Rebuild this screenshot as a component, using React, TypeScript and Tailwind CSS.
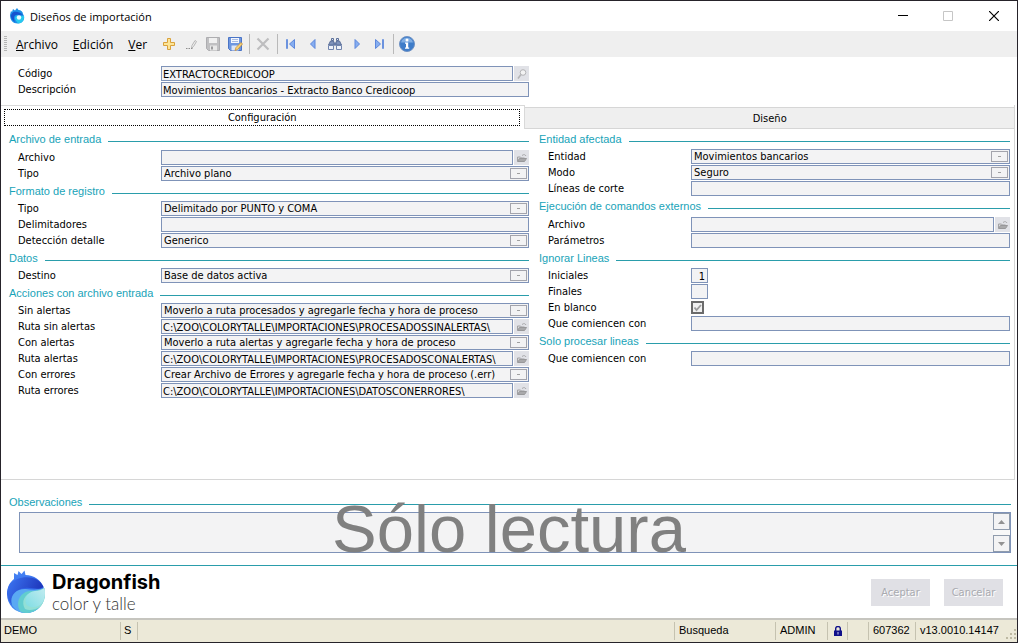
import React, { useId } from "react";
import type { ReactNode } from "react";

const FIELD =
  "h-[15px] min-w-0 flex-1 rounded-none border border-[#7f93b8] bg-[#f3f3f4] pt-px leading-[12px] text-black opacity-100 outline-none";

function WaveMark({ className }: { className: string }) {
  return (
    <svg viewBox="0 0 40 44" className={className} aria-hidden="true">
      <defs>
        <linearGradient id="body" x1="0" y1="0" x2="0.2" y2="1">
          <stop offset="0" stopColor="#4f8ff7" />
          <stop offset="0.5" stopColor="#2f62e8" />
          <stop offset="1" stopColor="#4a93f4" />
        </linearGradient>
        <linearGradient id="crest" x1="0" y1="0.2" x2="1" y2="0.6">
          <stop offset="0" stopColor="#3a72ef" />
          <stop offset="1" stopColor="#1b2fb4" />
        </linearGradient>
        <linearGradient id="foam" x1="1" y1="0" x2="0" y2="1">
          <stop offset="0" stopColor="#c3ecf0" />
          <stop offset="1" stopColor="#7fdde4" />
        </linearGradient>
      </defs>
      <path d="M8 9 L8 3 L11.500 5 L12.500 1 L15.500 4 L18.500 0.500 L19.500 5 C28 5 35 10 37.500 17 L38.500 20 C40 34 31 43 20 43 C9 43 1 35 1 24 C1 17 4 12 8 9Z" fill="url(#body)" />
      <path d="M4 14 C12 5 32 4 37.500 17 C31 21 26 17 19 18 C10 19 5 25 6 35 C1 29 0 20 4 14Z" fill="url(#crest)" />
      <path d="M6 35 C3 26 10 18 20 19 C27 20 33 20 38 18 C41 31 33 43 20 43 C14 43 9 40 6 35Z" fill="#5aa9f3" />
      <path d="M14 41 C9 33 14 21 25 21 C31 21 36 19 38.500 18 C41 31 33 43 20 43 C17 43 15 42 14 41Z" fill="#62cdcf" />
      <path d="M19 39 C15 32 18 24 27 22 C32 21 36 20 38.500 18 C40 27 38 33 34 37 C29 40 23 41 19 39Z" fill="#92dfd6" />
      <path d="M20 34 C18 27 22 22 29 21 C33 21 36 20 38.500 18 C40 26 38 32 34 35 C29 38 23 38 20 34Z" fill="url(#foam)" />
    </svg>
  );
}

function WindowMark() {
  return (
    <svg viewBox="0 0 16 16" className="size-4" aria-hidden="true">
      <path d="M1 7 L2 3 L3 4 L4 1 L6 2.500 L8 0 L9.500 2 C12 2 14 4 14 6 L15 8 C16 12 13 15.500 8.500 15.500 C4 15.500 1 12 1 7Z" fill="#1d8fe8" />
      <path d="M2.500 6 C5 2 10 4 14 6.500 L10 7 C5 6 4 9 6 14 C3 12 1 9 2.500 6Z" fill="#1553cf" />
      <path d="M6.500 12 C5 8 8 6.500 11 8 L15 8 C15.500 12 13 15.500 9 15.500 Z" fill="#27c9ee" />
      <circle cx="10" cy="9.500" r="2.200" fill="#eafcff" />
    </svg>
  );
}

const icon = "size-4";

const PlusIcon = (
  <svg viewBox="0 0 16 16" className={icon}>
    <path d="M6.500 2.500h3v4h4v3h-4v4h-3v-4h-4v-3h4z" fill="#fde596" stroke="#d9a13b" />
  </svg>
);
const PencilIcon = (
  <svg viewBox="0 0 16 16" className={icon}>
    <path d="M8.500 12.500l.5-3 3-5 1.500 1-3 5z" fill="#f2f2f2" stroke="#b4b4b4" />
    <path d="M3 12h1.500v1h-1.500zM5.500 12h1.500v1h-1.500zM8 12h1.500v1h-1.500z" fill="#8d8d8d" />
  </svg>
);
const SaveIcon = (
  <svg viewBox="0 0 16 16" className={icon}>
    <path d="M1.500 1.500h13v13h-11l-2-2z" fill="#c0c0c2" stroke="#adadb0" />
    <path d="M4 2h8v5h-8z" fill="#f0f0f0" />
    <path d="M5 9.500h7v5h-7z" fill="#e8e8e8" />
    <path d="M6 10.500h2v3h-2z" fill="#9b9b9d" />
  </svg>
);
const SaveEditIcon = (
  <svg viewBox="0 0 16 16" className={icon}>
    <path d="M1.500 1.500h13v13h-11l-2-2z" fill="#6f97df" stroke="#4a74c6" />
    <path d="M4 2h8v5h-8z" fill="#f4f7fd" />
    <path d="M5 3.500h6M5 5.500h6" stroke="#a9bce3" />
    <path d="M4.500 9.500h7v5h-7z" fill="#dce6f8" />
    <path d="M8 14.500l1-3 5-5 1.500 1.500-5 5.500z" fill="#f8d479" stroke="#c98f35" strokeWidth="0.8" />
  </svg>
);
const DeleteIcon = (
  <svg viewBox="0 0 16 16" className={icon}>
    <path d="M2.500 2.500l11 11M13.500 2.500l-11 11" stroke="#bdbdbf" strokeWidth="2.200" />
  </svg>
);
const FirstIcon = (
  <svg viewBox="0 0 16 16" className={icon}>
    <path d="M3.500 3.500h1v9h-1z" fill="#b5cff8" stroke="#6c93de" />
    <path d="M11.500 3.500v9l-5-4.500z" fill="#86aef0" stroke="#5d87dc" />
  </svg>
);
const PrevIcon = (
  <svg viewBox="0 0 16 16" className={icon}>
    <path d="M10 3.500v9l-4.500-4.500z" fill="#86aef0" stroke="#5d87dc" />
  </svg>
);
const FindIcon = (
  <svg viewBox="0 0 16 16" className={icon}>
    <path d="M4.500 2.500h2v2h-2zM9.500 2.500h2v2h-2z" fill="#dbe3f1" stroke="#5b6f99" />
    <path d="M3.500 5h3l1 4h-6zM9.500 5h3l2 4h-6z" fill="#7f93bb" stroke="#5b6f99" />
    <path d="M1.500 9.500h5v4h-5zM9.500 9.500h5v4h-5z" fill="#eef2f9" stroke="#7084ad" />
    <path d="M6.500 6.500h3v3h-3z" fill="#6479a5" />
  </svg>
);
const NextIcon = (
  <svg viewBox="0 0 16 16" className={icon}>
    <path d="M6 3.500v9l4.500-4.500z" fill="#86aef0" stroke="#5d87dc" />
  </svg>
);
const LastIcon = (
  <svg viewBox="0 0 16 16" className={icon}>
    <path d="M4.500 3.500v9l5-4.500z" fill="#86aef0" stroke="#5d87dc" />
    <path d="M11.500 3.500h1v9h-1z" fill="#b5cff8" stroke="#6c93de" />
  </svg>
);
const InfoIcon = (
  <svg viewBox="0 0 16 16" className={icon}>
    <circle cx="8" cy="8" r="7.500" fill="#3e7cc9" stroke="#6f92c4" />
    <path d="M2 6.500a6.200 6.200 0 0 1 12 0z" fill="#7fade3" />
    <circle cx="8" cy="4" r="1.500" fill="#fff" />
    <path d="M6 6.500h3.200v5h1v1.300h-4.200v-1.300h1v-3.700h-1z" fill="#fff" />
  </svg>
);

function Tool({ name, children }: { name: string; children: ReactNode }) {
  return (
    <button type="button" aria-label={name} className="flex h-6 w-[22px] items-center justify-center">
      {children}
    </button>
  );
}

function Separator() {
  return (
    <span className="flex h-5 w-[6px] justify-center">
      <span className="w-px bg-[#b9b9b9]" />
    </span>
  );
}

function Group({ title, tall, children }: { title: string; tall?: boolean; children: ReactNode }) {
  return (
    <section>
      <h2
        className={`flex items-center gap-[7px] pt-px font-['Liberation_Sans',Arial,sans-serif] text-[11px] leading-4 text-[#18a3b8] ${
          tall ? "pb-[3px]" : "pb-[2px]"
        }`}
      >
        {title}
        <span className="mt-1 h-px flex-1 bg-[#2a9dab]" />
      </h2>
      <div className="flex flex-col gap-px pb-px">{children}</div>
    </section>
  );
}

function Row({ label, id, children }: { label: string; id: string; children: ReactNode }) {
  return (
    <div className="flex h-[15px] items-center pl-[9px]">
      <label htmlFor={id} className="w-[143px] shrink-0">
        {label}
      </label>
      {children}
    </div>
  );
}

function FolderButton() {
  return (
    <button type="button" aria-label="Examinar" className="ml-px flex size-[15px] shrink-0 items-center justify-center bg-[#e1e2e7]">
      <svg viewBox="0 0 12 12" className="size-3">
        <path d="M1.500 9v-4h3l1 1h3v1" fill="#d8d8da" stroke="#a3a3a5" />
        <path d="M1.500 9.500l2-3h7l-2 3z" fill="#a9a9ab" stroke="#98989a" />
        <path d="M6 3.500c2-1.500 3-1 4 .5" fill="none" stroke="#a8a8aa" />
      </svg>
    </button>
  );
}

function TextRow({ label, value = "", folder }: { label: string; value?: string; folder?: boolean }) {
  const id = useId();
  return (
    <Row label={label} id={id}>
      <input id={id} type="text" readOnly value={value} className={`${FIELD} px-px`} />
      {folder && <FolderButton />}
    </Row>
  );
}

function SelectRow({ label, value }: { label: string; value: string }) {
  const id = useId();
  return (
    <Row label={label} id={id}>
      <div className="relative flex min-w-0 flex-1">
        <select id={id} defaultValue={value} className={`${FIELD} appearance-none pl-[2px]`}>
          <option>{value}</option>
        </select>
        <span className="pointer-events-none absolute inset-y-[2px] right-[2px] flex w-[17px] items-center justify-center border border-[#a3a4ac] bg-[#f3f3f4]">
          <span className="h-px w-[3px] bg-[#a0a0a0]" />
        </span>
      </div>
    </Row>
  );
}

function NumberRow({ label, value = "" }: { label: string; value?: string }) {
  const id = useId();
  return (
    <Row label={label} id={id}>
      <input
        id={id}
        type="text"
        readOnly
        value={value}
        className="h-[15px] w-[17px] rounded-none border border-[#7f93b8] bg-[#f3f3f4] pt-px pr-[2px] text-right leading-[12px] outline-none"
      />
    </Row>
  );
}

function CheckRow({ label }: { label: string }) {
  const id = useId();
  return (
    <Row label={label} id={id}>
      <span className="relative flex size-[13px]">
        <input id={id} type="checkbox" defaultChecked className="size-[13px] appearance-none border-2 border-[#6b6b6b] bg-[#f1f1f1]" />
        <svg viewBox="0 0 13 13" className="pointer-events-none absolute inset-0 size-[13px]">
          <path d="M3.500 6.500l2 2.500 4.500-5" fill="none" stroke="#9c9c9c" strokeWidth="1.800" />
        </svg>
      </span>
    </Row>
  );
}

export default function App() {
  return (
    <div className="flex min-h-screen flex-col border border-[#26232a] bg-white font-['DejaVu_Sans_Condensed','DejaVu_Sans',Tahoma,sans-serif] text-[11px] leading-[15px] text-black">
      <header className="flex h-[30px] items-center pl-2 font-['Open_Sans','Noto_Sans',sans-serif]">
        <WindowMark />
        <h1 className="ml-[5px] flex-1 text-[11px]">Diseños de importación</h1>
        <div className="flex">
          <button type="button" aria-label="Minimizar" className="flex h-[30px] w-[45px] items-center justify-center">
            <svg viewBox="0 0 10 10" className="size-[10px]" shapeRendering="crispEdges">
              <path d="M0 4.500h10" stroke="#000" />
            </svg>
          </button>
          <button type="button" aria-label="Maximizar" className="flex h-[30px] w-[46px] items-center justify-center">
            <svg viewBox="0 0 10 10" className="size-[10px]">
              <path d="M.5.5h9v9h-9z" fill="none" stroke="#c6c6c6" />
            </svg>
          </button>
          <button type="button" aria-label="Cerrar" className="flex h-[30px] w-[46px] items-center justify-center">
            <svg viewBox="0 0 10 10" className="size-[10px]">
              <path d="M0 0l10 10M10 0l-10 10" stroke="#000" strokeWidth="1.200" />
            </svg>
          </button>
        </div>
      </header>

      <div className="flex h-[26px] items-center bg-[#efefef] pl-[3px] font-['Open_Sans','Noto_Sans',sans-serif]">
        <span className="h-4 w-[3px] bg-[repeating-linear-gradient(#b5b5b5_0_1px,transparent_1px_2px)]" />
        <nav className="ml-[9px] flex gap-[15px] text-[12px]">
          <button type="button"><u>A</u>rchivo</button>
          <button type="button"><u>E</u>dición</button>
          <button type="button"><u>V</u>er</button>
        </nav>
        <div className="ml-[11px] flex items-center">
          <Tool name="Nuevo">{PlusIcon}</Tool>
          <Tool name="Modificar">{PencilIcon}</Tool>
          <Tool name="Guardar">{SaveIcon}</Tool>
          <Tool name="Guardar y editar">{SaveEditIcon}</Tool>
          <Separator />
          <Tool name="Eliminar">{DeleteIcon}</Tool>
          <Separator />
          <Tool name="Primero">{FirstIcon}</Tool>
          <Tool name="Anterior">{PrevIcon}</Tool>
          <Tool name="Buscar">{FindIcon}</Tool>
          <Tool name="Siguiente">{NextIcon}</Tool>
          <Tool name="Último">{LastIcon}</Tool>
          <Separator />
          <Tool name="Información">{InfoIcon}</Tool>
        </div>
      </div>

      <main className="flex flex-1 flex-col">
        <div className="grid grid-cols-[520fr_471fr] gap-x-[10px] pt-[9px] pr-[7px] pb-2 pl-2">
          <div className="flex flex-col gap-px">
            <Row label="Código" id="codigo">
              <input id="codigo" type="text" readOnly value="EXTRACTOCREDICOOP" className={`${FIELD} px-px`} />
              <button type="button" aria-label="Buscar código" className="ml-px flex size-[15px] shrink-0 items-center justify-center bg-[#e1e2e7]">
                <svg viewBox="0 0 12 12" className="size-3">
                  <circle cx="7" cy="4.500" r="2.800" fill="#f3f3f3" stroke="#b4b4b6" />
                  <path d="M5 6.500l-3 4" stroke="#b4b4b6" strokeWidth="1.500" />
                </svg>
              </button>
            </Row>
            <TextRow label="Descripción" value="Movimientos bancarios - Extracto Banco Credicoop" />
          </div>
        </div>

        <div className="mr-[2px] flex flex-1 flex-col border-r border-b border-[#d6d6d6]">
          <div role="tablist" className="grid grid-cols-[525fr_489fr]">
            <button type="button" role="tab" aria-selected="true" className="border-t border-r border-[#d9d9d9] py-[3px] pr-1 pl-[3px]">
              <span className="block border border-dotted border-black pt-px leading-[14px]">Configuración</span>
            </button>
            <button type="button" role="tab" aria-selected="false" className="mt-[2px] border-y border-[#d6d6d6] bg-[#efefef] pt-px">
              Diseño
            </button>
          </div>

          <div className="grid grid-cols-[520fr_471fr] gap-x-[10px] pt-px pr-1 pl-2">
            <div>
              <Group title="Archivo de entrada" tall>
                <TextRow label="Archivo" folder />
                <SelectRow label="Tipo" value="Archivo plano" />
              </Group>
              <Group title="Formato de registro">
                <SelectRow label="Tipo" value="Delimitado por PUNTO y COMA" />
                <TextRow label="Delimitadores" />
                <SelectRow label="Detección detalle" value="Generico" />
              </Group>
              <Group title="Datos">
                <SelectRow label="Destino" value="Base de datos activa" />
              </Group>
              <Group title="Acciones con archivo entrada">
                <SelectRow label="Sin alertas" value="Moverlo a ruta procesados y agregarle fecha y hora de proceso" />
                <TextRow label="Ruta sin alertas" value="C:\ZOO\COLORYTALLE\IMPORTACIONES\PROCESADOSSINALERTAS\" folder />
                <SelectRow label="Con alertas" value="Moverlo a ruta alertas y agregarle fecha y hora de proceso" />
                <TextRow label="Ruta alertas" value="C:\ZOO\COLORYTALLE\IMPORTACIONES\PROCESADOSCONALERTAS\" folder />
                <SelectRow label="Con errores" value="Crear Archivo de Errores y agregarle fecha y hora de proceso (.err)" />
                <TextRow label="Ruta errores" value="C:\ZOO\COLORYTALLE\IMPORTACIONES\DATOSCONERRORES\" folder />
              </Group>
            </div>
            <div>
              <Group title="Entidad afectada">
                <SelectRow label="Entidad" value="Movimientos bancarios" />
                <SelectRow label="Modo" value="Seguro" />
                <TextRow label="Líneas de corte" />
              </Group>
              <Group title="Ejecución de comandos externos" tall>
                <TextRow label="Archivo" folder />
                <TextRow label="Parámetros" />
              </Group>
              <Group title="Ignorar Lineas">
                <NumberRow label="Iniciales" value="1" />
                <NumberRow label="Finales" />
                <CheckRow label="En blanco" />
                <TextRow label="Que comiencen con" />
              </Group>
              <Group title="Solo procesar lineas">
                <TextRow label="Que comiencen con" />
              </Group>
            </div>
          </div>
        </div>

        <section className="relative pt-[13px] pr-[6px] pb-3 pl-2">
          <h2 className="flex items-center gap-[7px] pt-px pb-[2px] font-['Liberation_Sans',Arial,sans-serif] text-[11px] leading-4 text-[#18a3b8]">
            <label htmlFor="observaciones">Observaciones</label>
            <span className="mt-1 h-px flex-1 bg-[#2a9dab]" />
          </h2>
          <div className="ml-[10px] flex h-[41px] border border-[#7f93b8] bg-[#f3f3f4]">
            <textarea id="observaciones" readOnly className="min-w-0 flex-1 resize-none bg-transparent outline-none" />
            <div className="flex flex-col justify-between bg-[#f8f8f8]">
              <button type="button" aria-label="Subir" className="flex h-[17px] w-[17px] items-center justify-center border border-[#8f9bac] bg-[#f3f3f4]">
                <svg viewBox="0 0 7 4" className="h-1 w-[7px]"><path d="M0 4l3.500-4 3.500 4z" fill="#929292" /></svg>
              </button>
              <button type="button" aria-label="Bajar" className="flex h-[17px] w-[17px] items-center justify-center border border-[#8f9bac] bg-[#f3f3f4]">
                <svg viewBox="0 0 7 4" className="h-1 w-[7px]"><path d="M0 0l3.500 4 3.500-4z" fill="#929292" /></svg>
              </button>
            </div>
          </div>
          <p className="pointer-events-none absolute inset-x-0 bottom-3 text-center font-['Liberation_Sans',Arial,sans-serif] text-[67px] leading-[48px] text-[#808080]">
            Sólo lectura
          </p>
        </section>
      </main>

      <footer>
        <div className="flex h-[53px] items-center border-t border-[#2a9dab] pr-[14px] pl-[5px]">
          <WaveMark className="h-11 w-10" />
          <div className="ml-[6px] flex-1">
            <p className="font-['Inter',sans-serif] text-[20px] leading-6 font-bold">Dragonfish</p>
            <p className="font-['Lato',sans-serif] text-[17px] leading-5 font-light text-[#333]">color y talle</p>
          </div>
          <div className="flex gap-[14px] text-[#a9aab0]">
            <button type="button" className="h-[27px] w-[59px] bg-[#e0e0e5] [text-shadow:1px_1px_0_#fff]">Aceptar</button>
            <button type="button" className="h-[27px] w-[59px] bg-[#e0e0e5] [text-shadow:1px_1px_0_#fff]">Cancelar</button>
          </div>
        </div>
        <div className="flex h-6 items-stretch border-t-2 border-[#c6c5bf] bg-[#ece9d8] py-[2px] pl-[3px] font-['Liberation_Sans',Arial,sans-serif] leading-[17px]">
          <span className="w-[116px]">DEMO</span>
          <span className="w-[17px] border-l border-[#c5c2b0] pl-[3px]">S</span>
          <span className="flex-1 border-l border-[#c5c2b0]" />
          <span className="w-[101px] border-l border-[#c5c2b0] pl-1">Busqueda</span>
          <span className="w-[52px] border-l border-[#c5c2b0] pl-1">ADMIN</span>
          <span className="flex w-5 items-center justify-center border-l border-[#c5c2b0]">
            <svg viewBox="0 0 8 10" className="h-[10px] w-2" role="img" aria-label="Bloqueado">
              <path d="M1.700 5v-2.500a2.300 2 0 0 1 4.600 0v2.500" fill="none" stroke="#10108a" strokeWidth="1.400" />
              <path d="M0 4.500h8v5.500h-8z" fill="#10108a" />
              <path d="M3.500 6h1v2.500h-1z" fill="#c9c9f0" />
            </svg>
          </span>
          <span className="w-[21px] border-l border-[#c5c2b0]" />
          <span className="w-[47px] border-l border-[#c5c2b0] pl-1">607362</span>
          <span className="w-[90px] border-l border-[#c5c2b0] pl-1">v13.0010.14147</span>
          <svg viewBox="0 0 12 12" className="size-3 self-end" shapeRendering="crispEdges" aria-hidden="true">
            <path d="M9 1h2v2h-2zM5 5h2v2h-2zM9 5h2v2h-2zM1 9h2v2h-2zM5 9h2v2h-2zM9 9h2v2h-2z" fill="#bdb9a3" />
          </svg>
        </div>
      </footer>
    </div>
  );
}
